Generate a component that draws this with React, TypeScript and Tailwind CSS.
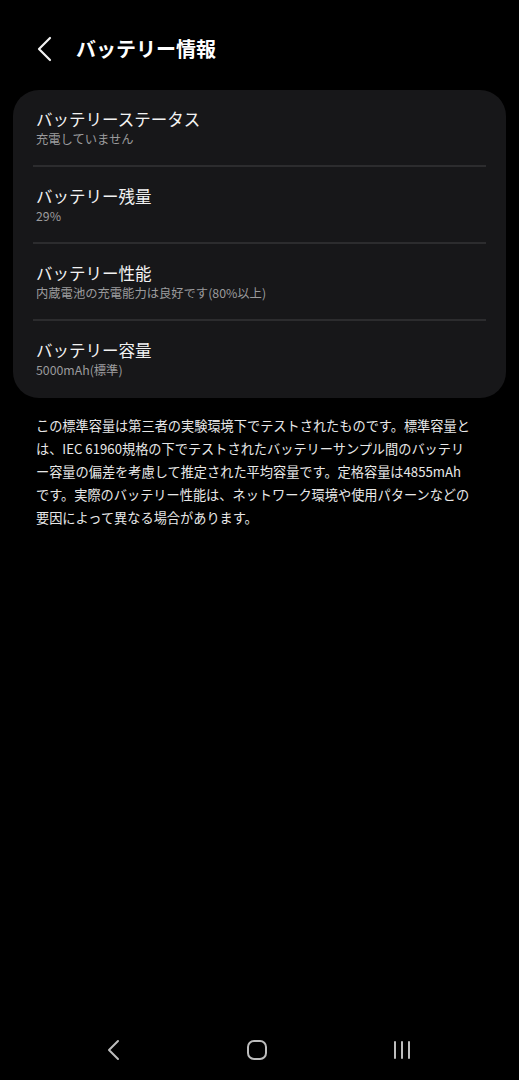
import React from "react";

const rows = [
  { t: "バッテリーステータス", s: "充電していません" },
  { t: "バッテリー残量", s: "29%" },
  { t: "バッテリー性能", s: "内蔵電池の充電能力は良好です(80%以上)" },
  { t: "バッテリー容量", s: "5000mAh(標準)" },
];

const lines = [
  "この標準容量は第三者の実験環境下でテストされたものです。標準容量と",
  "は、IEC 61960規格の下でテストされたバッテリーサンプル間のバッテリ",
  "ー容量の偏差を考慮して推定された平均容量です。定格容量は4855mAh",
  "です。実際のバッテリー性能は、ネットワーク環境や使用パターンなどの",
  "要因によって異なる場合があります。",
];

export default function App() {
  return (
    <div
      className="w-[519px] h-[1080px] bg-black flex flex-col text-white"
      style={{ fontFamily: '"Noto Sans CJK JP", "Noto Sans", sans-serif' }}
    >
      <div className="h-[90px] flex items-center pl-[36px] pt-[8px]">
        <svg width="18" height="26" viewBox="0 0 18 26">
          <path d="M14 2 L3 13 L14 24" fill="none" stroke="#f2f2f2" strokeWidth="2.2" strokeLinecap="round" strokeLinejoin="round" />
        </svg>
        <div className="ml-[22px] text-[20px] font-bold leading-none tracking-[0px] text-white">
          バッテリー情報
        </div>
      </div>

      <div className="mx-[13px] bg-[#171719] rounded-[26px] pb-[2px]">
        {rows.map((r, i) => (
          <div key={i}>
            {i > 0 && <div className="mx-[20px] h-[2px] bg-[#2c2c2e]" />}
            <div className="h-[75px] pl-[23px] flex flex-col justify-center">
              <div className="text-[16.5px] leading-[22px] text-[#f2f2f2]">{r.t}</div>
              <div className="text-[12.3px] leading-[18px] text-[#9b9b9d]">{r.s}</div>
            </div>
          </div>
        ))}
      </div>

      <div className="pl-[36px] pt-[16px] text-[13.2px] leading-[23px] text-[#e8e8e8] whitespace-nowrap">
        {lines.map((l, i) => (
          <div key={i}>{l}</div>
        ))}
      </div>

      <div className="mt-auto h-[60px] flex items-center justify-between pl-[104px] pr-[106px]">
        <svg width="18" height="22" viewBox="0 0 18 22">
          <path d="M14 2 L5 11 L14 20" fill="none" stroke="#bdbdbd" strokeWidth="2" strokeLinecap="round" strokeLinejoin="round" />
        </svg>
        <svg width="22" height="22" viewBox="0 0 22 22">
          <rect x="2" y="2" width="18" height="18" rx="6" fill="none" stroke="#bdbdbd" strokeWidth="2" />
        </svg>
        <svg width="22" height="22" viewBox="0 0 22 22">
          <path d="M4 3 V19 M11 3 V19 M18 3 V19" stroke="#bdbdbd" strokeWidth="2" strokeLinecap="round" />
        </svg>
      </div>
    </div>
  );
}
